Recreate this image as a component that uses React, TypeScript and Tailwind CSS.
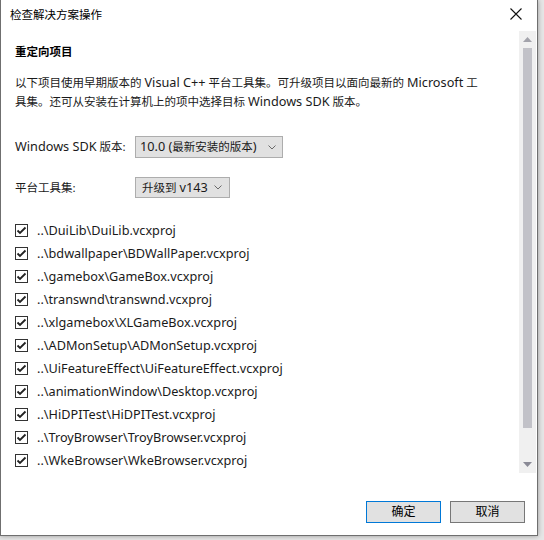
import React from "react";

const files = [
  "..\\DuiLib\\DuiLib.vcxproj",
  "..\\bdwallpaper\\BDWallPaper.vcxproj",
  "..\\gamebox\\GameBox.vcxproj",
  "..\\transwnd\\transwnd.vcxproj",
  "..\\xlgamebox\\XLGameBox.vcxproj",
  "..\\ADMonSetup\\ADMonSetup.vcxproj",
  "..\\UiFeatureEffect\\UiFeatureEffect.vcxproj",
  "..\\animationWindow\\Desktop.vcxproj",
  "..\\HiDPITest\\HiDPITest.vcxproj",
  "..\\TroyBrowser\\TroyBrowser.vcxproj",
  "..\\WkeBrowser\\WkeBrowser.vcxproj",
];

const font = {
  fontFamily: '"Segoe UI", "Noto Sans", "Noto Sans CJK SC", sans-serif',
};

function L({ children }: { children: React.ReactNode }) {
  return <span className="text-[12.7px]">{children}</span>;
}

function Chevron() {
  return (
    <svg width="8" height="5" viewBox="0 0 8 5" className="shrink-0">
      <polyline points="0.5,0.5 4,4 7.5,0.5" fill="none" stroke="#6a6a6a" strokeWidth="1" />
    </svg>
  );
}

function Check() {
  return (
    <div className="w-[13px] h-[13px] border border-[#333333] bg-white flex items-center justify-center shrink-0">
      <svg width="11" height="11" viewBox="0 0 11 11">
        <polyline points="1.5,5.5 4,8 9.5,2.5" fill="none" stroke="#222" strokeWidth="1.8" />
      </svg>
    </div>
  );
}

export default function App() {
  return (
    <div className="w-[544px] h-[540px] bg-[#e6e6e6] overflow-hidden" style={font}>
      <div className="w-[538px] h-[536px] bg-white border-l border-r border-b border-[#6f6f6f] flex flex-col shadow-[0_0_5px_rgba(0,0,0,0.35)] text-[11.5px] text-[#1a1a1a]">
        {/* title bar */}
        <div className="h-[31px] flex items-start justify-between shrink-0">
          <div className="pl-[9px] pt-[6px] leading-[18px] text-[11.5px] text-black">检查解决方案操作</div>
          <div className="w-[30px] h-[30px] flex items-center justify-center mr-[6px] -mt-[1px]">
            <svg width="12" height="12" viewBox="0 0 12 12">
              <path d="M0.5 0.5 L11.5 11.5 M11.5 0.5 L0.5 11.5" stroke="#111" strokeWidth="1.1" fill="none" />
            </svg>
          </div>
        </div>
        {/* scroll area */}
        <div className="h-[442px] flex shrink-0">
          <div className="flex-1 pl-[14px] pt-[12px] overflow-hidden">
            <div className="h-[18px] leading-[18px] font-bold text-black">重定向项目</div>
            <p className="mt-[12px] leading-[18px] whitespace-nowrap">
              以下项目使用早期版本的 <L>Visual C++</L> 平台工具集。可升级项目以面向最新的 <L>Microsoft</L> 工
              <br />
              具集。还可从安装在计算机上的项中选择目标 <L>Windows SDK</L> 版本。
            </p>
            <div className="mt-[25px] flex items-center h-[22px]">
              <div className="w-[120px]">
                <L>Windows SDK</L> 版本:
              </div>
              <div className="w-[148px] h-[22px] bg-[#e1e1e1] border border-[#adadad] flex items-center justify-between pl-[4px] pr-[6px]">
                <span>
                  <L>10.0 (</L>最新安装的版本<L>)</L>
                </span>
                <Chevron />
              </div>
            </div>
            <div className="mt-[19px] flex items-center h-[21px]">
              <div className="w-[120px]">平台工具集:</div>
              <div className="w-[95px] h-[21px] bg-[#e1e1e1] border border-[#adadad] flex items-center justify-between pl-[6px] pr-[7px]">
                <span>
                  升级到 <L>v143</L>
                </span>
                <Chevron />
              </div>
            </div>
            <div className="mt-[21px] flex flex-col">
              {files.map((f) => (
                <div key={f} className="h-[23px] flex items-center gap-[9px]">
                  <Check />
                  <span className="text-[12.7px]">{f}</span>
                </div>
              ))}
            </div>
          </div>
          {/* scrollbar */}
          <div className="w-[17px] h-full bg-[#f0f0f0] flex flex-col items-center mr-[1px]">
            <div className="h-[17px] w-full flex items-center justify-center">
              <svg width="9" height="5" viewBox="0 0 9 5">
                <polygon points="0,5 4.5,0 9,5" fill="#a3a3ab" />
              </svg>
            </div>
            <div className="w-[9px] h-[380px] bg-[#c2c2c8]" />
            <div className="flex-1" />
            <div className="h-[17px] w-full flex items-center justify-center">
              <svg width="9" height="5" viewBox="0 0 9 5">
                <polygon points="0,0 4.5,5 9,0" fill="#8a8a96" />
              </svg>
            </div>
          </div>
        </div>
        {/* buttons */}
        <div className="flex-1 flex justify-end items-start pt-[28px] pr-[12px] gap-[9px]">
          <button className="w-[75px] h-[22px] bg-[#e1e1e1] border border-[#0078d7] text-[12px] text-black flex items-center justify-center" style={font}>
            确定
          </button>
          <button className="w-[75px] h-[22px] bg-[#e1e1e1] border border-[#777777] text-[12px] text-black flex items-center justify-center" style={font}>
            取消
          </button>
        </div>
      </div>
    </div>
  );
}
